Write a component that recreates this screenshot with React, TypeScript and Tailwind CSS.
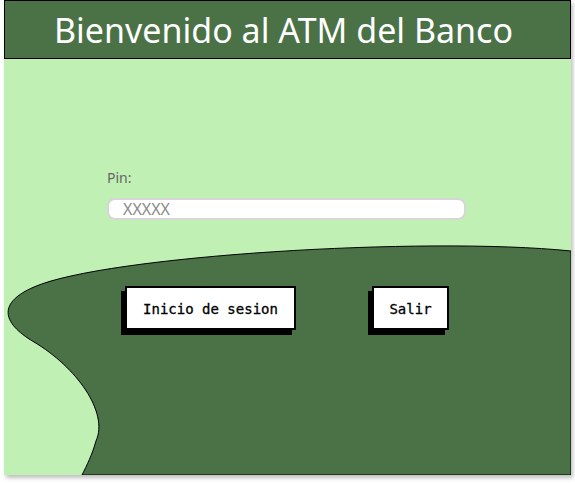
import React from 'react'

// Fondo ondulado detrás de los botones
function Wave() {
  return (
    <svg
      className="absolute inset-0 h-full w-full"
      viewBox="0 0 567 416"
      preserveAspectRatio="none"
      aria-hidden="true"
    >
      <path
        d="M567,192 C420,177 100,197 30,228 C-5,243 -4,263 30,283 C72,308 105,353 92,382 C88,396 83,406 78,416 L567,416 Z"
        fill="#4b7146"
        stroke="#000"
        strokeWidth="1"
      />
    </svg>
  )
}

export default function App() {
  return (
    <div className="min-h-[483px] bg-white pl-1 pr-1 pb-2">
      <div className="flex h-[475px] w-[567px] flex-col bg-[#c0f0b4] shadow-[2px_3px_4px_rgba(0,0,0,0.25)]">
        <header className="flex h-[59px] shrink-0 items-center justify-center border border-black bg-[#4b7146] pr-2">
          <h1 className="font-['Noto_Sans',sans-serif] text-[34px] leading-none text-white">
            Bienvenido al ATM del Banco
          </h1>
        </header>

        <main className="relative flex-1 overflow-hidden">
          <Wave />
          <div className="relative flex flex-col px-[103px] pt-[109px]">
            <label className="font-['Noto_Sans',sans-serif] text-[14px] leading-5 text-[#666]">
              Pin:
            </label>
            <input
              type="password"
              placeholder="XXXXX"
              className="mt-[10px] h-[22px] w-[359px] rounded-lg border-2 border-[#d6d6d6] bg-white px-[14px] font-['Noto_Sans',sans-serif] text-[16px] placeholder:text-[#8a8a8a] outline-none"
            />
            <div className="mt-[66px] flex gap-[76px] pl-[18px]">
              <button
                type="button"
                className="h-[44px] w-[171px] border-2 border-black bg-white pt-[2px] font-['DejaVu_Sans_Mono',monospace] text-[14px] text-black [-webkit-text-stroke:0.3px_#000] shadow-[-4px_5px_0_#000]"
              >
                Inicio de sesion
              </button>
              <button
                type="button"
                className="h-[44px] w-[77px] border-2 border-black bg-white pt-[2px] font-['DejaVu_Sans_Mono',monospace] text-[14px] text-black [-webkit-text-stroke:0.3px_#000] shadow-[-4px_5px_0_#000]"
              >
                Salir
              </button>
            </div>
          </div>
        </main>
      </div>
    </div>
  )
}
